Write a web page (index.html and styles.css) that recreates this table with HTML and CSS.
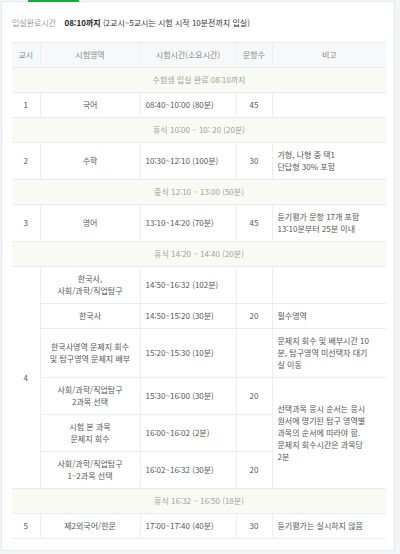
FILE: index.html
```html
<!DOCTYPE html>
<html lang="ko">
<head>
<meta charset="utf-8">
<title>시험 시간표</title>
<link rel="stylesheet" href="styles.css">
</head>
<body>
<div class="card">
  <span class="tab-indicator"></span>
  <p class="entry">
    <span class="entry-label">입실완료시간</span>
    <strong class="entry-time">08:10까지</strong>
    <span class="entry-note">(2교시~5교시는 시험 시작 10분전까지 입실)</span>
  </p>
  <table class="schedule">
    <colgroup>
      <col class="c-period">
      <col class="c-subject">
      <col class="c-time">
      <col class="c-count">
      <col class="c-note">
    </colgroup>
    <thead>
      <tr><th>교시</th><th>시험영역</th><th>시험시간(소요시간)</th><th>문항수</th><th>비고</th></tr>
    </thead>
    <tbody>
      <tr class="notice"><td colspan="5">수험생 입실 완료 08:10까지</td></tr>
      <tr>
        <td class="period">1</td><td class="subject">국어</td><td class="time">08:40~10:00 (80분)</td><td class="count">45</td><td class="note"></td>
      </tr>
      <tr class="notice"><td colspan="5">휴식 10:00 ~ 10: 20 (20분)</td></tr>
      <tr>
        <td class="period">2</td><td class="subject">수학</td><td class="time">10:30~12:10 (100분)</td><td class="count">30</td><td class="note">가형, 나형 중 택1<br>단답형 30% 포함</td>
      </tr>
      <tr class="notice"><td colspan="5">중식 12:10 ~ 13:00 (50분)</td></tr>
      <tr>
        <td class="period">3</td><td class="subject">영어</td><td class="time">13:10~14:20 (70분)</td><td class="count">45</td><td class="note">듣기평가 문항 17개 포함<br>13:10분부터 25분 이내</td>
      </tr>
      <tr class="notice"><td colspan="5">휴식 14:20 ~ 14:40 (20분)</td></tr>
      <tr>
        <td class="period" rowspan="6">4</td><td class="subject">한국사,<br>사회/과학/직업탐구</td><td class="time">14:50~16:32 (102분)</td><td class="count"></td><td class="note"></td>
      </tr>
      <tr>
        <td class="subject">한국사</td><td class="time">14:50~15:20 (30분)</td><td class="count">20</td><td class="note">필수영역</td>
      </tr>
      <tr>
        <td class="subject">한국사영역 문제지 회수<br>및 탐구영역 문제지 배부</td><td class="time">15:20~15:30 (10분)</td><td class="count"></td><td class="note">문제지 회수 및 배부시간 10<br>분, 탐구영역 미선택자 대기<br>실 이동</td>
      </tr>
      <tr>
        <td class="subject">사회/과학/직업탐구<br>2과목 선택</td><td class="time">15:30~16:00 (30분)</td><td class="count">20</td><td class="note" rowspan="3">선택과목 응시 순서는 응시<br>원서에 명기된 탐구 영역별<br>과목의 순서에 따라야 함.<br>문제지 회수시간은 과목당<br>2분</td>
      </tr>
      <tr>
        <td class="subject">시험 본 과목<br>문제지 회수</td><td class="time">16:00~16:02 (2분)</td><td class="count"></td>
      </tr>
      <tr>
        <td class="subject">사회/과학/직업탐구<br>1~2과목 선택</td><td class="time">16:02~16:32 (30분)</td><td class="count">20</td>
      </tr>
      <tr class="notice"><td colspan="5">휴식 16:32 ~ 16:50 (18분)</td></tr>
      <tr>
        <td class="period">5</td><td class="subject">제2외국어/한문</td><td class="time">17:00~17:40 (40분)</td><td class="count">30</td><td class="note">듣기평가는 실시하지 않음</td>
      </tr>
    </tbody>
  </table>
</div>
</body>
</html>
```

FILE: styles.css
```css
html, body {
  margin: 0;
  padding: 0;
}
body {
  background: #f4f5f7;
  font-family: "Noto Sans CJK KR", "Noto Sans", sans-serif;
  font-size: 8px;
  line-height: 12px;
  color: #555;
  padding: 1px 5px 1px 1px;
}
.card {
  position: relative;
  background: #fff;
  border: 1px solid #e4e7eb;
  padding: 15px 7px 11px 10px;
}
.tab-indicator {
  position: absolute;
  left: 26px;
  top: -2px;
  width: 51px;
  height: 2px;
  background: #1fa63c;
}
.entry {
  margin: 0 0 13px;
  line-height: 12px;
}
.entry-label {
  color: #9a9a9a;
  margin-right: 6px;
}
.entry-time {
  color: #1a1a1a;
  font-weight: 700;
}
.entry-note {
  color: #333;
}
.schedule {
  width: 374px;
  border-collapse: collapse;
  table-layout: fixed;
}
.c-period { width: 28px; }
.c-subject { width: 100px; }
.c-time { width: 96px; }
.c-count { width: 36px; }
.c-note { width: 114px; }
.schedule th,
.schedule td {
  padding: 6px 5px;
  border-top: 1px solid #e8ebef;
  border-bottom: 1px solid #e8ebef;
  border-left: 1px solid #eceef2;
  border-right: 1px solid #eceef2;
  vertical-align: middle;
  font-weight: 400;
}
.schedule tr > :first-child { border-left: none; }
.schedule tr > :last-child { border-right: none; }
.schedule tr > td.period { border-left: none; }
.schedule th {
  background: #f6f8fa;
  color: #888;
  text-align: center;
}
.notice td {
  background: #fafaf5;
  color: #a0a0a0;
  text-align: center;
  border-left: none;
  border-right: none;
}
.period,
.subject,
.count {
  text-align: center;
}
.time,
.note {
  text-align: left;
}
.time { padding-left: 6px; }
```
